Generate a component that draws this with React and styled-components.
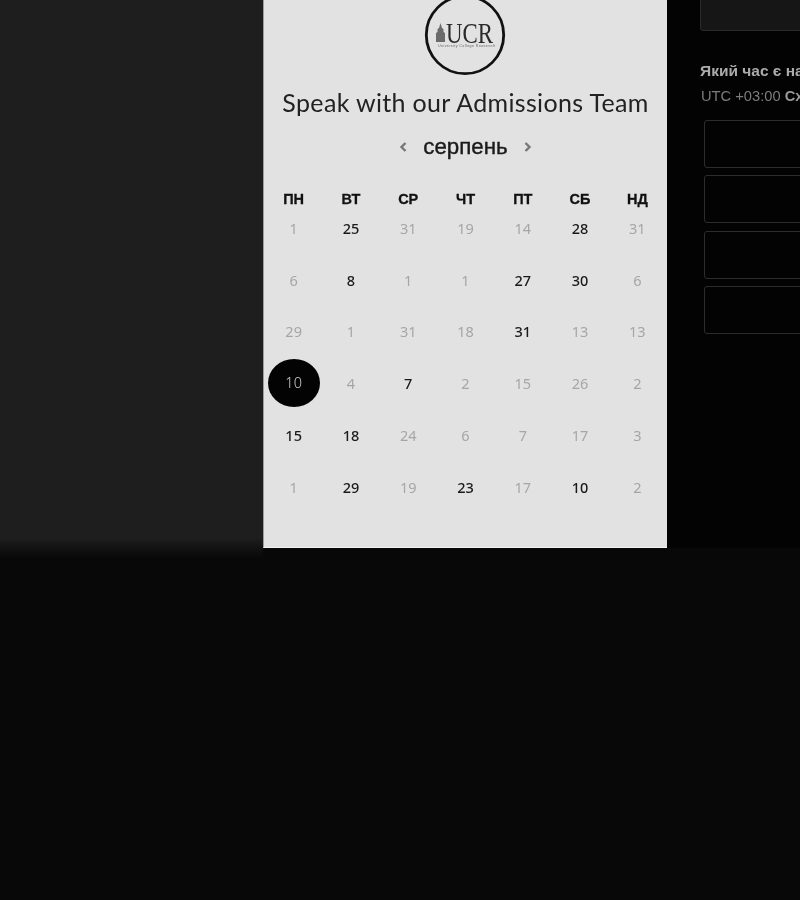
import styled, { createGlobalStyle } from 'styled-components';

const GlobalStyle = createGlobalStyle`
  html, body {
    margin: 0;
    background: #080808;
  }
`;

const Page = styled.div`
  width: 800px;
  height: 900px;
  overflow: hidden;
  display: flex;
  flex-direction: column;
  background: #080808;
  filter: grayscale(1);
`;

const Top = styled.div`
  height: 548px;
  display: flex;
  flex-shrink: 0;
`;

const Sidebar = styled.div`
  width: 263px;
  flex-shrink: 0;
  background: linear-gradient(to bottom, #1e1e1e 0, #1e1e1e 538px, #121212 548px);
`;

const Card = styled.div`
  width: 404px;
  flex-shrink: 0;
  background: #e2e2e2;
  border-left: 1px solid #9c9c9c;
  border-bottom: 1px solid #f2f2f2;
  box-sizing: border-box;
  display: flex;
  flex-direction: column;
  align-items: center;
`;

const Logo = styled.svg`
  display: block;
  width: 82px;
  height: 82px;
  margin: -6px 0 0 -1px;
  flex-shrink: 0;
`;

const Title = styled.h1`
  margin: 11px 0 0;
  font-family: "Lato", sans-serif;
  font-size: 25px;
  line-height: 30px;
  font-weight: 400;
  letter-spacing: 0.34px;
  color: #222;
  white-space: nowrap;
`;

const MonthRow = styled.div`
  margin-top: 15px;
  height: 30px;
  display: flex;
  align-items: center;
  gap: 15px;
`;

const Month = styled.span`
  font-family: "Liberation Sans", sans-serif;
  font-size: 22.3px;
  color: #1a1a1a;
  -webkit-text-stroke: 0.4px #1a1a1a;
`;

const Chevron = styled.svg`
  width: 9px;
  height: 12px;
  fill: none;
  stroke: #777;
  stroke-width: 2.4;
`;

const HeadRow = styled.div`
  width: 401px;
  margin-top: 30px;
  display: grid;
  grid-template-columns: repeat(7, 1fr);
`;

const Head = styled.div`
  font-family: "Liberation Sans", sans-serif;
  font-size: 14.5px;
  line-height: 14px;
  font-weight: 700;
  color: #111;
  -webkit-text-stroke: 0.3px #111;
  text-align: center;
`;

const Days = styled.div`
  width: 401px;
  margin-top: -4px;
  display: grid;
  grid-template-columns: repeat(7, 1fr);
  grid-auto-rows: 51.8px;
`;

const Day = styled.div`
  display: flex;
  align-items: center;
  justify-content: center;
  font-family: "Noto Sans", sans-serif;
  font-size: 14.5px;
  font-weight: ${(props) => (props.$on ? 500 : 400)};
  color: ${(props) => (props.$on ? '#1a1a1a' : '#a6a6a6')};
`;

const Selected = styled.span`
  width: 52px;
  height: 48px;
  padding-bottom: 3px;
  box-sizing: border-box;
  border-radius: 50%;
  background: #030303;
  color: #cfcfcf;
  display: flex;
  align-items: center;
  justify-content: center;
  font-weight: 300;
`;

const Right = styled.div`
  flex: 1;
  min-width: 0;
  background: #030303;
  overflow: hidden;
  padding-left: 33px;
`;

const SearchBar = styled.div`
  width: 200px;
  height: 40px;
  margin-top: -9px;
  box-sizing: border-box;
  background: #161616;
  border: 1px solid #2a2a2a;
  border-radius: 3px;
`;

const Question = styled.div`
  margin-top: 31px;
  font-family: "Liberation Sans", sans-serif;
  font-size: 15.5px;
  line-height: 18px;
  font-weight: 700;
  color: #ababab;
  white-space: nowrap;
`;

const Zone = styled.div`
  margin: 7px 0 0 1px;
  font-family: "Liberation Sans", sans-serif;
  font-size: 14.7px;
  line-height: 18px;
  color: #7c7c7c;
  white-space: nowrap;

  b {
    color: #9a9a9a;
  }
`;

const Slots = styled.div`
  margin: 15px 0 0 4px;
  display: flex;
  flex-direction: column;
  gap: 7.4px;
`;

const Slot = styled.div`
  width: 200px;
  height: 48px;
  box-sizing: border-box;
  border: 1px solid #2c2c2c;
  border-radius: 3px;
`;

// the shade of the sidebar runs a few pixels past its bottom edge
const Bottom = styled.div`
  flex: 1;
  background: linear-gradient(to bottom, #121212, #080808) no-repeat 0 0 / 263px 10px, #080808;
`;

const heads = ['ПН', 'ВТ', 'СР', 'ЧТ', 'ПТ', 'СБ', 'НД'];

// [number, state] 0 - muted, 1 - available, 2 - selected
const days = [
  [1, 0], [25, 1], [31, 0], [19, 0], [14, 0], [28, 1], [31, 0],
  [6, 0], [8, 1], [1, 0], [1, 0], [27, 1], [30, 1], [6, 0],
  [29, 0], [1, 0], [31, 0], [18, 0], [31, 1], [13, 0], [13, 0],
  [10, 2], [4, 0], [7, 1], [2, 0], [15, 0], [26, 0], [2, 0],
  [15, 1], [18, 1], [24, 0], [6, 0], [7, 0], [17, 0], [3, 0],
  [1, 0], [29, 1], [19, 0], [23, 1], [17, 0], [10, 1], [2, 0],
];

function UcrLogo() {
  return (
    <Logo viewBox="0 0 82 82">
      <circle cx="41" cy="41" r="38.7" fill="none" stroke="#111" strokeWidth="2.8" />
      <path d="M12 48v-9l1.500-1v-3l1.500-1 1.500-5 1.500 5 1.500 1v3l1.500 1v9z" fill="#6a6a6a" />
      <text x="22" y="49" fontFamily="Liberation Serif" fontSize="29" fill="#2a2a2a" textLength="47" lengthAdjust="spacingAndGlyphs">UCR</text>
      <text x="14" y="53" fontFamily="Liberation Sans" fontSize="3.6" fill="#666" textLength="57">University College Roosevelt</text>
    </Logo>
  );
}

function App() {
  return (
    <Page>
      <GlobalStyle />
      <Top>
        <Sidebar />
        <Card>
          <UcrLogo />
          <Title>Speak with our Admissions Team</Title>
          <MonthRow>
            <Chevron viewBox="0 0 9 12"><path d="M6.500 2 2.500 6l4 4" /></Chevron>
            <Month>серпень</Month>
            <Chevron viewBox="0 0 9 12"><path d="M2.500 2l4 4-4 4" /></Chevron>
          </MonthRow>
          <HeadRow>
            {heads.map((h) => <Head key={h}>{h}</Head>)}
          </HeadRow>
          <Days>
            {days.map(([n, state], i) => (
              <Day key={i} $on={state === 1}>
                {state === 2 ? <Selected>{n}</Selected> : n}
              </Day>
            ))}
          </Days>
        </Card>
        <Right>
          <SearchBar />
          <Question>Який час є найкращим для вас?</Question>
          <Zone>UTC +03:00 <b>Східноєвропейський час</b></Zone>
          <Slots>
            <Slot />
            <Slot />
            <Slot />
            <Slot />
          </Slots>
        </Right>
      </Top>
      <Bottom />
    </Page>
  );
}

export default App;
